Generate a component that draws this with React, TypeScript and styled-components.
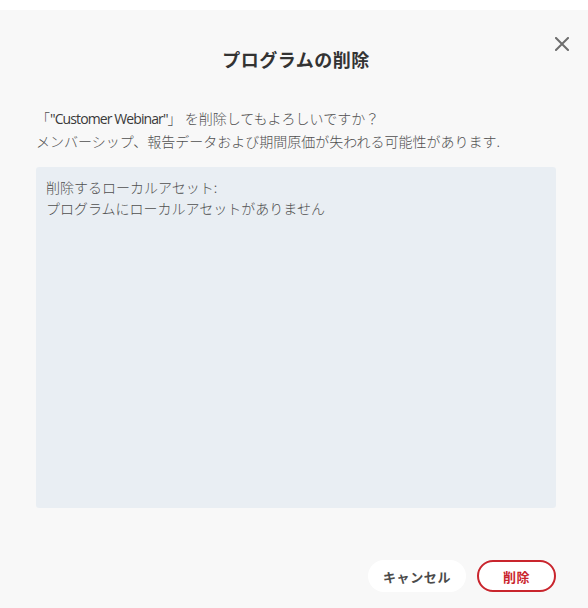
import React from "react";
import styled, { createGlobalStyle } from "styled-components";

const GlobalStyle = createGlobalStyle`
  html, body {
    margin: 0;
    padding: 0;
    background: #ffffff;
    font-family: "Noto Sans CJK JP", "Open Sans", sans-serif;
  }
`;

const Dialog = styled.div`
  position: relative;
  margin-top: 10px;
  height: 598px;
  box-sizing: border-box;
  background: #f8f8f8;
  padding: 37px 32px 16px 36px;
  display: flex;
  flex-direction: column;
`;

const Title = styled.h2`
  margin: 0;
  text-align: center;
  font-size: 18px;
  line-height: 24px;
  font-weight: 700;
  color: #333333;
  letter-spacing: 0.5px;
`;

const CloseButton = styled.button`
  position: absolute;
  top: 22px;
  right: 14px;
  width: 24px;
  height: 24px;
  padding: 0;
  border: none;
  background: transparent;
  display: flex;
  align-items: center;
  justify-content: center;
  cursor: pointer;
`;

const Message = styled.div`
  margin-top: 36px;
  font-size: 14px;
  line-height: 23px;
  font-weight: 300;
  color: #505050;
`;

const Name = styled.span`
  font-family: "Open Sans", "Noto Sans CJK JP", sans-serif;
  font-weight: 400;
  letter-spacing: -0.9px;
  color: #3a3a3a;
`;

const AssetBox = styled.div`
  margin-top: 14px;
  height: 341px;
  box-sizing: border-box;
  padding: 10px 10px;
  background: #e9eef3;
  border-radius: 3px;
  font-size: 14px;
  line-height: 21px;
  font-weight: 300;
  color: #505050;
`;

const Footer = styled.div`
  margin-top: auto;
  display: flex;
  justify-content: flex-end;
  gap: 11px;
`;

const Button = styled.button<{ $danger?: boolean }>`
  height: 32px;
  box-sizing: border-box;
  border-radius: 16px;
  font-family: "Noto Sans CJK JP", sans-serif;
  font-size: 13px;
  font-weight: 700;
  letter-spacing: 0.6px;
  cursor: pointer;
  padding: 0 12px;
  width: ${(p) => (p.$danger ? "79px" : "98px")};
  background: #ffffff;
  color: ${(p) => (p.$danger ? "#c9252d" : "#4b4b4b")};
  border: 2px solid ${(p) => (p.$danger ? "#c9252d" : "transparent")};
`;

export default function App() {
  return (
    <>
      <GlobalStyle />
      <Dialog>
        <Title>プログラムの削除</Title>
        <CloseButton aria-label="閉じる">
          <svg width="14" height="14" viewBox="0 0 14 14">
            <path
              d="M1 1 L13 13 M13 1 L1 13"
              stroke="#6e6e6e"
              strokeWidth="2"
              strokeLinecap="square"
            />
          </svg>
        </CloseButton>
        <Message>
          <div>
            「<Name>"Customer Webinar"</Name>」 を削除してもよろしいですか？
          </div>
          <div>メンバーシップ、報告データおよび期間原価が失われる可能性があります.</div>
        </Message>
        <AssetBox>
          <div>削除するローカルアセット:</div>
          <div>プログラムにローカルアセットがありません</div>
        </AssetBox>
        <Footer>
          <Button>キャンセル</Button>
          <Button $danger>削除</Button>
        </Footer>
      </Dialog>
    </>
  );
}
